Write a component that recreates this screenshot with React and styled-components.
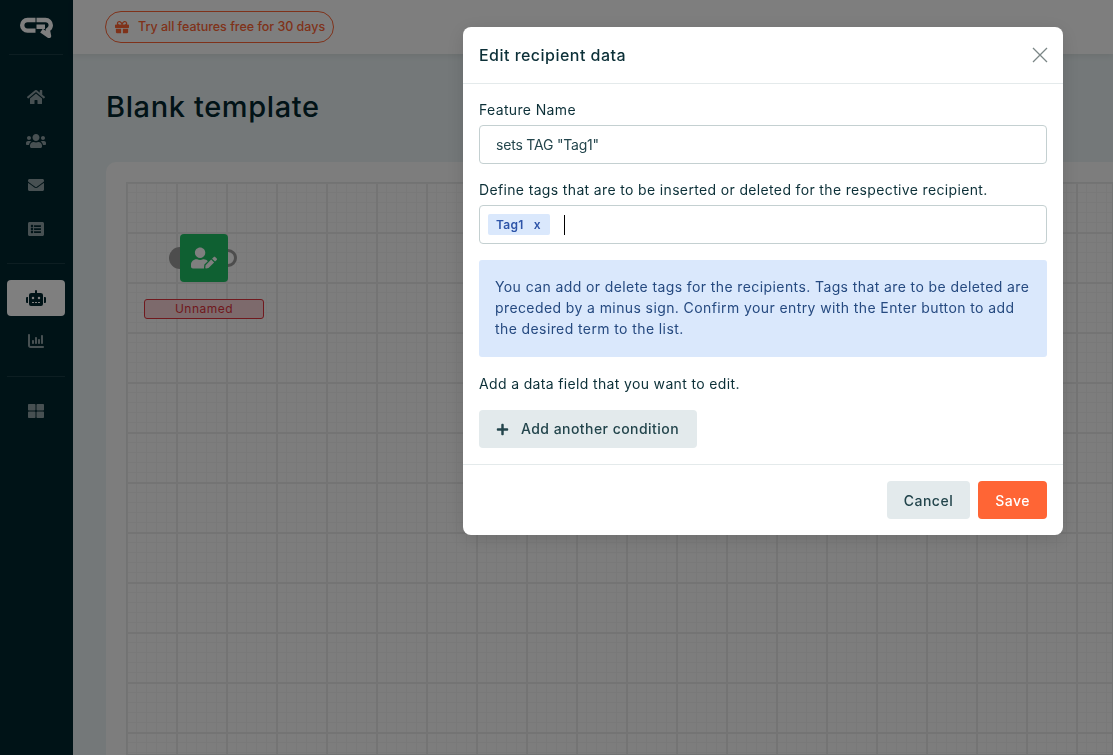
import styled, { createGlobalStyle } from "styled-components";
import { FaHome, FaUsers, FaEnvelope, FaListAlt, FaRobot, FaThLarge, FaGift, FaUserEdit, FaPlus } from "react-icons/fa";
import { FaChartColumn } from "react-icons/fa6";

const GlobalStyle = createGlobalStyle`
    html, body{
        margin: 0;
        height: 100%;
        overflow: hidden;
    }
    body{
        font-family: "Inter", "Open Sans", sans-serif;
        color: #0c3038;
    }
    *{
        box-sizing: border-box;
    }
`;

const topIcons = [
    {Icon: FaHome, size: 18},
    {Icon: FaUsers, size: 20},
    {Icon: FaEnvelope, size: 16},
    {Icon: FaListAlt, size: 16}
];

export default function App(){

    return(
        <Page>
            <GlobalStyle />
            <Sidebar>
                <LogoBox>
                    <Logo />
                </LogoBox>
                <NavGroup>
                    {topIcons.map(({Icon, size}, i) => (
                        <NavItem key={i} $size={size}><Icon /></NavItem>
                    ))}
                </NavGroup>
                <NavDivider />
                <NavGroup $tight>
                    <NavItem $active $size={20}><FaRobot /></NavItem>
                    <NavItem $size={16}><FaChartColumn /></NavItem>
                </NavGroup>
                <NavDivider $low />
                <NavGroup $tight>
                    <NavItem $size={16}><FaThLarge /></NavItem>
                </NavGroup>
            </Sidebar>
            <Main>
                <TopBar>
                    <TrialPill>
                        <FaGift />
                        Try all features free for 30 days
                    </TrialPill>
                </TopBar>
                <Content>
                    <Title>Blank template</Title>
                    <Card>
                        <Canvas>
                            <Node>
                                <NodeIn />
                                <NodeOut />
                                <NodeBody><FaUserEdit /></NodeBody>
                            </Node>
                            <NodeLabel>Unnamed</NodeLabel>
                        </Canvas>
                    </Card>
                </Content>
            </Main>
            <Backdrop>
                <Modal>
                    <ModalHeader>
                        <ModalTitle>Edit recipient data</ModalTitle>
                        <CloseButton>
                            <svg width="16" height="16" viewBox="0 0 16 16" fill="none" stroke="#7b8686" strokeWidth="1.3">
                                <path d="M1 1 L15 15 M15 1 L1 15" />
                            </svg>
                        </CloseButton>
                    </ModalHeader>
                    <ModalBody>
                        <Label>Feature Name</Label>
                        <Field>sets TAG "Tag1"</Field>
                        <Label $spaced>Define tags that are to be inserted or deleted for the respective recipient.</Label>
                        <TagField>
                            <Tag>Tag1<TagRemove>x</TagRemove></Tag>
                            <Caret />
                        </TagField>
                        <InfoBox>
                            You can add or delete tags for the recipients. Tags that are to be deleted are preceded by a minus sign. Confirm your entry with the Enter button to add the desired term to the list.
                        </InfoBox>
                        <Label $plain>Add a data field that you want to edit.</Label>
                        <AddButton><FaPlus />Add another condition</AddButton>
                    </ModalBody>
                    <ModalFooter>
                        <FooterButton>Cancel</FooterButton>
                        <FooterButton $primary>Save</FooterButton>
                    </ModalFooter>
                </Modal>
            </Backdrop>
        </Page>
    );
}

function Logo(){
    return(
        <svg width="33" height="22" viewBox="0 0 33 22" fill="none" stroke="#fff" strokeWidth="4.4" strokeLinejoin="round">
            <path d="M15.5 4 H7.5 a5.3 5.3 0 0 0 -5.3 5.3 v0 a5.3 5.3 0 0 0 5.3 5.3 H15.5" />
            <path d="M16.5 4 H25.5 a5.3 5.3 0 0 1 5.3 5.3 v0 a5.3 5.3 0 0 1 -3 4.6 L29 20 L21.5 14.6 M16.5 10.8 H25" />
        </svg>
    );
}

const Page = styled.div`
    width: 100%;
    height: 100vh;
    display: flex;
    background: #e8f1f2;
    overflow: hidden;
`;
const Sidebar = styled.nav`
    width: 73px;
    flex-shrink: 0;
    padding-right: 1px;
    background: #00262f;
    display: flex;
    flex-direction: column;
    align-items: center;
`;
const LogoBox = styled.div`
    width: 54px;
    height: 55px;
    display: flex;
    justify-content: center;
    align-items: center;
    border-bottom: 1px solid rgba(255, 255, 255, 0.1);
`;
const NavGroup = styled.div`
    width: 100%;
    padding: ${props => props.$tight ? "0" : "23px 0 12px"};
    display: flex;
    flex-direction: column;
    align-items: center;
    gap: 6px;
`;
const NavItem = styled.div`
    width: 58px;
    height: ${props => props.$active ? "36px" : "38px"};
    border-radius: 4px;
    display: flex;
    justify-content: center;
    align-items: center;
    color: ${props => props.$active ? "#00262f" : "#8fa0a4"};
    background: ${props => props.$active ? "#ffffff" : "transparent"};
    font-size: ${props => props.$size}px;
`;
const NavDivider = styled.div`
    width: 58px;
    height: 1px;
    margin: ${props => props.$low ? "16px 0 15px" : "3px 0 16px"};
    background: rgba(255, 255, 255, 0.1);
`;
const Main = styled.div`
    flex: 1;
    min-width: 0;
    display: flex;
    flex-direction: column;
`;
const TopBar = styled.header`
    height: 54px;
    flex-shrink: 0;
    padding: 0 32px;
    display: flex;
    align-items: center;
    background: #fdfdfd;
    box-shadow: 0 2px 6px rgba(0, 0, 0, 0.08);
`;
const TrialPill = styled.div`
    width: 229px;
    height: 32px;
    margin-top: -1px;
    padding: 0 9px;
    display: flex;
    align-items: center;
    gap: 9px;
    border: 1px solid #ff6535;
    border-radius: 16px;
    color: #ff6535;
    font-size: 12.5px;
    font-weight: 500;
    letter-spacing: -0.02px;
    white-space: nowrap;

    svg{
        flex-shrink: 0;
        font-size: 14px;
    }
`;
const Content = styled.main`
    flex: 1;
    min-height: 0;
    padding: 36px 0 0 33px;
    display: flex;
    flex-direction: column;
`;
const Title = styled.h1`
    margin: 0 0 38px;
    height: 34px;
    font-size: 29px;
    line-height: 34px;
    font-weight: 500;
    letter-spacing: 0.62px;
    color: #03262f;
`;
const Card = styled.section`
    flex: 1;
    padding: 20px 0 0 20px;
    background: #fafbfb;
    border-radius: 10px 0 0 0;
`;
const Canvas = styled.div`
    position: relative;
    height: 100%;
    border: 1px solid #e4e6e6;
    background-color: #fbfbfb;
    background-image:
        linear-gradient(#e9e9e9 2px, transparent 2px),
        linear-gradient(90deg, #e9e9e9 2px, transparent 2px),
        linear-gradient(#f2f2f2 1px, transparent 1px),
        linear-gradient(90deg, #f2f2f2 1px, transparent 1px);
    background-size: 50px 50px, 50px 50px, 10px 10px, 10px 10px;
    background-position: -1px -1px;
`;
const Node = styled.div`
    position: absolute;
    left: 53px;
    top: 51px;
    width: 48px;
    height: 48px;
`;
const NodeBody = styled.div`
    position: relative;
    width: 48px;
    height: 48px;
    border-radius: 4px;
    background: #1fc165;
    color: #ffffff;
    font-size: 26px;
    display: flex;
    justify-content: center;
    align-items: center;
`;
const NodeIn = styled.div`
    position: absolute;
    left: -11px;
    top: 13px;
    width: 22px;
    height: 22px;
    border-radius: 50%;
    background: #9a9a9a;
`;
const NodeOut = styled.div`
    position: absolute;
    right: -9px;
    top: 15px;
    width: 18px;
    height: 18px;
    border-radius: 50%;
    border: 3px solid #9a9a9a;
    background: #ffffff;
`;
const NodeLabel = styled.div`
    position: absolute;
    left: 17px;
    top: 116px;
    width: 120px;
    height: 20px;
    border: 1px solid #e0323c;
    border-radius: 3px;
    background: #fbd5d8;
    color: #e0323c;
    font-size: 12px;
    letter-spacing: 0.5px;
    line-height: 18px;
    text-align: center;
`;
const Backdrop = styled.div`
    position: fixed;
    inset: 0;
    background: rgba(0, 0, 0, 0.5);
    display: flex;
    align-items: flex-start;
    padding: 27px 0 0 463px;
`;
const Modal = styled.div`
    width: 600px;
    background: #ffffff;
    border-radius: 8px;
    box-shadow: 0 4px 20px rgba(0, 0, 0, 0.12);
`;
const ModalHeader = styled.div`
    height: 57px;
    padding: 0 15px 0 16px;
    display: flex;
    justify-content: space-between;
    align-items: center;
    border-bottom: 1px solid #e4eaeb;
`;
const ModalTitle = styled.h2`
    margin: 0;
    font-size: 16px;
    font-weight: 500;
    letter-spacing: 0.47px;
    color: #0c3038;
`;
const CloseButton = styled.button`
    padding: 0;
    width: 16px;
    height: 16px;
    display: flex;
    border: none;
    background: none;
`;
const ModalBody = styled.div`
    padding: 15px 16px;
    height: 380px;
`;
const Label = styled.div`
    height: 21px;
    margin: ${props => props.$spaced ? "15px 0 5px" : props.$plain ? "16px 0 16px" : "0 0 5px"};
    font-size: 14px;
    line-height: 21px;
    letter-spacing: 0.35px;
    color: #0c3038;
    white-space: nowrap;
`;
const Field = styled.div`
    height: 39px;
    padding: 0 16px;
    display: flex;
    align-items: center;
    border: 1px solid #c4d0d1;
    border-radius: 4px;
    font-size: 14px;
    letter-spacing: -0.2px;
    color: #23454c;
`;
const TagField = styled.div`
    height: 39px;
    padding: 0 8px;
    display: flex;
    align-items: center;
    border: 1px solid #c4d0d1;
    border-radius: 4px;
`;
const Tag = styled.span`
    width: 62px;
    height: 21px;
    padding: 0 8px;
    display: flex;
    align-items: center;
    gap: 10px;
    border-radius: 2px;
    background: #dae8fc;
    color: #2d54a8;
    font-size: 12px;
    font-weight: 600;
    letter-spacing: 0.3px;
`;
const TagRemove = styled.span`
    font-weight: 600;
`;
const Caret = styled.span`
    width: 1px;
    height: 20px;
    margin-left: 14px;
    background: #000000;
`;
const InfoBox = styled.div`
    margin-top: 16px;
    height: 97px;
    padding: 16px;
    border-radius: 3px;
    background: #dae8fc;
    font-size: 14px;
    line-height: 21px;
    letter-spacing: 0.4px;
    color: #264a80;
`;
const AddButton = styled.button`
    height: 38px;
    width: 218px;
    padding: 0 16px 2px 17px;
    display: flex;
    align-items: center;
    gap: 12px;
    border: none;
    border-radius: 4px;
    background: #e3eaec;
    color: #23454c;
    font-family: inherit;
    font-size: 14px;
    font-weight: 500;
    letter-spacing: 0.45px;
    white-space: nowrap;

    svg{
        font-size: 13px;
        margin-top: 2px;
    }
`;
const ModalFooter = styled.div`
    height: 71px;
    padding: 0 16px;
    display: flex;
    justify-content: flex-end;
    align-items: center;
    gap: 8px;
    border-top: 1px solid #e4eaeb;
`;
const FooterButton = styled.button`
    height: 38px;
    padding: 0 17px;
    border: none;
    border-radius: 4px;
    background: ${props => props.$primary ? "#ff6535" : "#e3eaec"};
    color: ${props => props.$primary ? "#ffffff" : "#23454c"};
    font-family: inherit;
    font-size: 14px;
    font-weight: 500;
    letter-spacing: 0.5px;
`;
